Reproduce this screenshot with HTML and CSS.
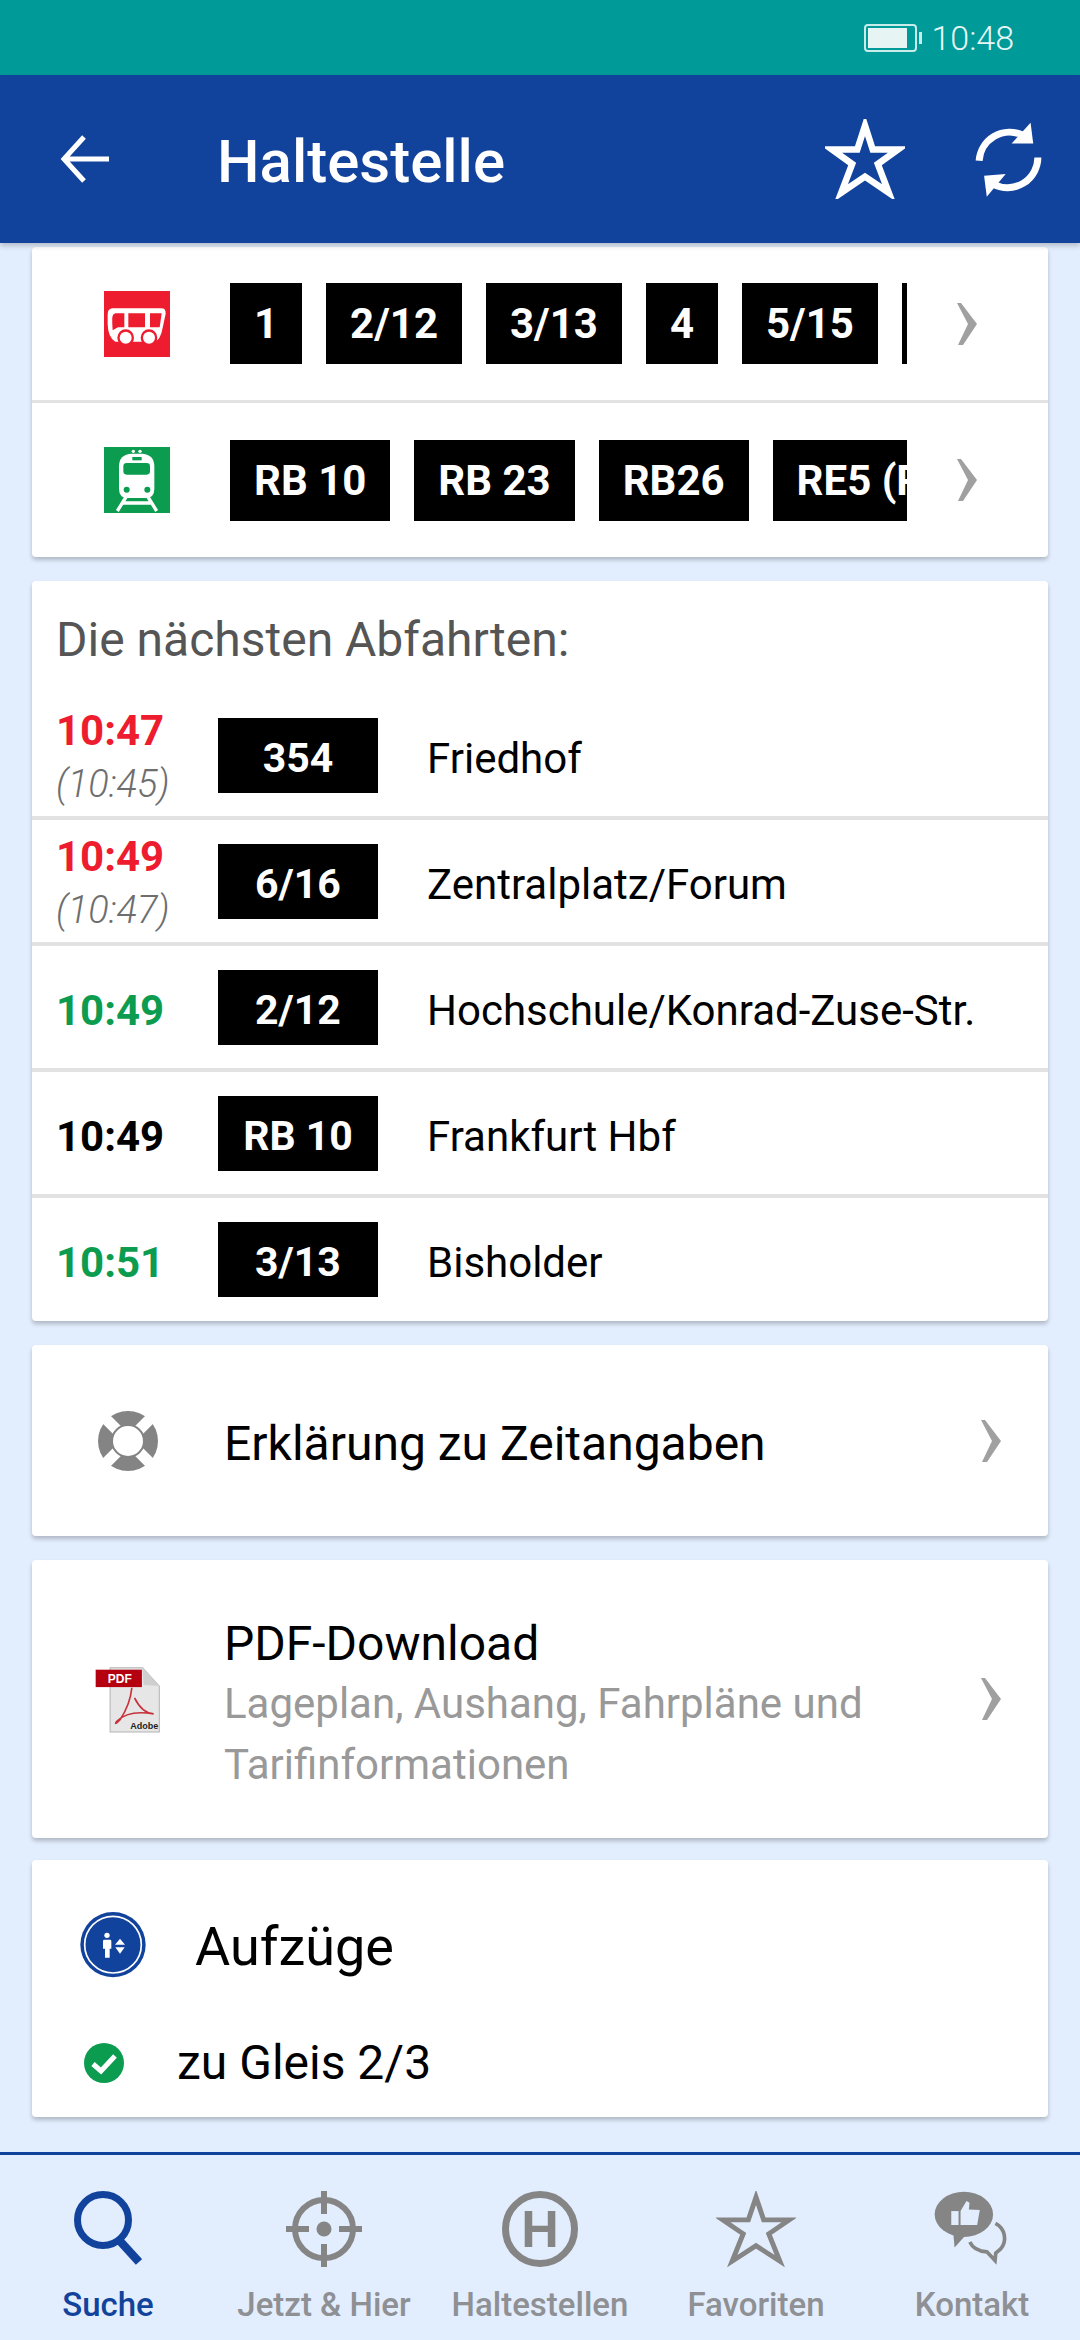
FILE: index.html
```html
<!DOCTYPE html>
<html lang="de">
<head>
    <meta charset="UTF-8">
    <meta name="viewport" content="width=device-width, initial-scale=1.0">
    <title>Haltestelle</title>
    <link rel="stylesheet" href="styles.css">
</head>
<body>
    <div class="statusbar">
        <svg class="battery" viewBox="0 0 60 28" width="60" height="28">
            <rect x="1" y="1" width="51" height="26" rx="3" fill="none" stroke="#c8ecea" stroke-width="2"/>
            <rect x="4" y="4" width="39" height="20" fill="#e6f5f3"/>
            <rect x="55" y="8" width="3" height="12" fill="#c8ecea"/>
        </svg>
        <span class="clock">10:48</span>
    </div>

    <header class="appbar">
        <svg class="back" viewBox="0 0 50 50" width="50" height="50">
            <path d="M24 3 L4 25 L24 47 M4 25 H49" fill="none" stroke="#fff" stroke-width="5"/>
        </svg>
        <h1>Haltestelle</h1>
        <svg class="action-star" viewBox="0 0 80 80" width="80" height="80">
            <polygon points="40,6.6 47.7,30.4 73.2,30.4 52.8,45 63.8,73.8 40,57.6 16.2,73.8 27.2,45 6.8,30.4 32.3,30.4" fill="none" stroke="#fff" stroke-width="6.5" stroke-miterlimit="10"/>
        </svg>
        <svg class="action-refresh" viewBox="490 30 210 232" width="70" height="77">
            <path d="M505 150 A92 92 0 0 1 635 72 M682 140 A92 92 0 0 1 550 222" fill="none" stroke="#fff" stroke-width="21"/>
            <polygon points="660,35 668,98 603,98" fill="#fff"/>
            <polygon points="528,258 520,195 585,190" fill="#fff"/>
        </svg>
    </header>

    <main class="content">
        <section class="card">
            <div class="lines-row">
                <svg class="mode-icon" viewBox="0 0 198 198" width="66" height="66">
                    <rect width="198" height="198" fill="#ed1c2e"/>
                    <path d="M24 52 H172 Q186 52 185 68 L176 110 Q170 148 150 152 H34 Q12 140 11 100 V70 Q11 54 24 52Z" fill="#fff"/>
                    <path d="M34 67 H61 V109 H42 L26 118 Q24 90 25 78 Q26 69 34 67Z M73 67 H123 V109 H73Z M138 67 H173 L167 109 H138Z" fill="#ed1c2e"/>
                    <circle cx="65" cy="140" r="25" fill="#ed1c2e"/>
                    <circle cx="135" cy="140" r="25" fill="#ed1c2e"/>
                    <circle cx="65" cy="140" r="18" fill="#fff"/>
                    <circle cx="135" cy="140" r="18" fill="#fff"/>
                </svg>
                <div class="strip">
                    <span class="badge">1</span>
                    <span class="badge">2/12</span>
                    <span class="badge">3/13</span>
                    <span class="badge">4</span>
                    <span class="badge">5/15</span>
                    <span class="badge">6/16</span>
                </div>
                <svg class="chevron" viewBox="0 0 20 42" width="20" height="42"><polygon points="0,0 4,0 20,21 6,42 1,42 11,21" fill="#a0a0a0"/></svg>
            </div>
            <div class="lines-row divided">
                <svg class="mode-icon" viewBox="0 0 198 198" width="66" height="66">
                    <rect width="198" height="198" fill="#0c9c50"/>
                    <path d="M45 58 Q45 24 80 20 H116 Q151 24 151 58 V125 Q151 153 125 153 H71 Q45 153 45 125Z" fill="#fff"/>
                    <rect x="58" y="48" width="80" height="35" rx="10" fill="#0c9c50"/>
                    <rect x="85" y="30" width="28" height="10" fill="#0c9c50"/>
                    <circle cx="88" cy="13" r="5" fill="#fff"/>
                    <circle cx="108" cy="13" r="5" fill="#fff"/>
                    <circle cx="68" cy="128" r="9" fill="#0c9c50"/>
                    <circle cx="130" cy="128" r="9" fill="#0c9c50"/>
                    <path d="M66 150 L40 192 M132 150 L158 192 M56 168 H142" fill="none" stroke="#fff" stroke-width="10"/>
                </svg>
                <div class="strip">
                    <span class="badge">RB 10</span>
                    <span class="badge">RB 23</span>
                    <span class="badge">RB26</span>
                    <span class="badge">RE5 (RB)</span>
                </div>
                <svg class="chevron" viewBox="0 0 20 42" width="20" height="42"><polygon points="0,0 4,0 20,21 6,42 1,42 11,21" fill="#a0a0a0"/></svg>
            </div>
        </section>

        <section class="card">
            <h2 class="departures-title">Die nächsten Abfahrten:</h2>
            <div class="departure">
                <div class="times"><span class="time late">10:47</span><span class="planned">(10:45)</span></div>
                <span class="badge badge-fixed">354</span>
                <span class="destination">Friedhof</span>
            </div>
            <div class="departure">
                <div class="times"><span class="time late">10:49</span><span class="planned">(10:47)</span></div>
                <span class="badge badge-fixed">6/16</span>
                <span class="destination">Zentralplatz/Forum</span>
            </div>
            <div class="departure">
                <div class="times"><span class="time ontime">10:49</span></div>
                <span class="badge badge-fixed">2/12</span>
                <span class="destination">Hochschule/Konrad-Zuse-Str.</span>
            </div>
            <div class="departure">
                <div class="times"><span class="time">10:49</span></div>
                <span class="badge badge-fixed">RB 10</span>
                <span class="destination">Frankfurt Hbf</span>
            </div>
            <div class="departure">
                <div class="times"><span class="time ontime">10:51</span></div>
                <span class="badge badge-fixed">3/13</span>
                <span class="destination">Bisholder</span>
            </div>
        </section>

        <section class="card link-card link-help">
            <svg class="link-icon" viewBox="0 0 60 60" width="60" height="60">
                <circle cx="30" cy="30" r="30" fill="#848484"/>
                <path d="M8 8 L52 52 M52 8 L8 52" stroke="#fff" stroke-width="11"/>
                <circle cx="30" cy="30" r="16" fill="#fff" stroke="#848484" stroke-width="2"/>
            </svg>
            <div class="link-text">
                <div class="link-title">Erklärung zu Zeitangaben</div>
            </div>
            <svg class="chevron" viewBox="0 0 20 42" width="20" height="42"><polygon points="0,0 4,0 20,21 6,42 1,42 11,21" fill="#a0a0a0"/></svg>
        </section>

        <section class="card link-card link-pdf">
            <svg class="link-icon" viewBox="30 35 200 200" width="67" height="67">
                <path d="M75 40 H172 L222 95 V232 H75Z" fill="#e6e6e6" stroke="#b4b4b4" stroke-width="3"/>
                <path d="M172 40 L175 92 L222 95Z" fill="#cfcfcf"/>
                <path d="M140 100 Q135 150 105 195 Q85 215 95 200 Q130 165 205 178 Q170 175 148 130" fill="none" stroke="#c8323c" stroke-width="5"/>
                <rect x="32" y="46" width="138" height="52" fill="#b4000f"/>
                <text x="68" y="86" class="pdf-label">PDF</text>
                <text x="135" y="222" class="pdf-brand">Adobe</text>
            </svg>
            <div class="link-text">
                <div class="link-title">PDF-Download</div>
                <div class="link-sub">Lageplan, Aushang, Fahrpläne und Tarifinformationen</div>
            </div>
            <svg class="chevron" viewBox="0 0 20 42" width="20" height="42"><polygon points="0,0 4,0 20,21 6,42 1,42 11,21" fill="#a0a0a0"/></svg>
        </section>

        <section class="card lifts">
            <div class="lifts-head">
                <svg viewBox="120 95 198 198" width="66" height="66">
                    <circle cx="219" cy="193" r="98" fill="#12439c"/>
                    <circle cx="219" cy="193" r="85" fill="none" stroke="#fff" stroke-width="5"/>
                    <circle cx="201" cy="165" r="8" fill="#fff"/>
                    <path d="M193 178 H210 Q214 178 214 182 V205 H209 V232 H195 V205 H189 V182 Q189 178 193 178Z" fill="#fff"/>
                    <polygon points="240,175 225,193 255,193" fill="#fff"/>
                    <polygon points="226,201 254,201 240,220" fill="#fff"/>
                </svg>
                <h2>Aufzüge</h2>
            </div>
            <div class="lift-row">
                <svg viewBox="0 0 40 40" width="40" height="40">
                    <circle cx="20" cy="20" r="20" fill="#0c9c50"/>
                    <path d="M9 21 L17 28 L31 13" fill="none" stroke="#fff" stroke-width="5"/>
                </svg>
                <span>zu Gleis 2/3</span>
            </div>
        </section>
    </main>

    <nav class="tabbar">
        <div class="tab active">
            <svg viewBox="0 0 68 76" width="68" height="76">
                <circle cx="29" cy="29" r="25.5" fill="none" stroke="#12439c" stroke-width="7"/>
                <path d="M45 49 L65 71" stroke="#12439c" stroke-width="8.5"/>
            </svg>
            <span>Suche</span>
        </div>
        <div class="tab">
            <svg viewBox="0 0 76 76" width="76" height="76">
                <circle cx="38" cy="38" r="29" fill="none" stroke="#858585" stroke-width="6"/>
                <path d="M38 0 V23 M38 53 V76 M0 38 H23 M53 38 H76" stroke="#858585" stroke-width="6"/>
                <circle cx="38" cy="38" r="7.5" fill="#858585"/>
            </svg>
            <span>Jetzt &amp; Hier</span>
        </div>
        <div class="tab">
            <svg viewBox="0 0 76 76" width="76" height="76">
                <circle cx="38" cy="38" r="34.5" fill="none" stroke="#858585" stroke-width="7"/>
                <text x="38" y="56" class="stop-label">H</text>
            </svg>
            <span>Haltestellen</span>
        </div>
        <div class="tab">
            <svg viewBox="0 0 80 80" width="80" height="76" preserveAspectRatio="none">
                <polygon points="40,6.6 47.7,30.4 73.2,30.4 52.8,45 63.8,73.8 40,57.6 16.2,73.8 27.2,45 6.8,30.4 32.3,30.4" fill="none" stroke="#858585" stroke-width="5" stroke-miterlimit="10"/>
            </svg>
            <span>Favoriten</span>
        </div>
        <div class="tab">
            <svg viewBox="30 25 232 228" width="77" height="76">
                <ellipse cx="120" cy="95" rx="88" ry="68" fill="#858585"/>
                <polygon points="88,150 92,195 128,155" fill="#858585"/>
                <rect x="82" y="85" width="22" height="42" fill="#e2edfd"/>
                <path d="M110 85 L128 55 L137 60 L135 80 L168 82 L160 127 H110Z" fill="#e2edfd"/>
                <path d="M215 122 A50 50 0 0 1 230 200 L216 212 L214 234 L190 208 Q150 205 138 178" fill="none" stroke="#858585" stroke-width="11"/>
            </svg>
            <span>Kontakt</span>
        </div>
    </nav>
</body>
</html>
```

FILE: styles.css
```css
body {
    margin: 0;
    width: 1080px;
    height: 2340px;
    overflow: hidden;
    display: flex;
    flex-direction: column;
    background-color: #e2edfd;
    font-family: Roboto, "Noto Sans", sans-serif;
    color: #000000;
}

svg {
    display: block;
    flex: none;
}

h1, h2 {
    margin: 0;
    font-weight: 400;
}

/* top bars */
.statusbar {
    height: 75px;
    flex: none;
    display: flex;
    justify-content: flex-end;
    align-items: center;
    padding-right: 66px;
    background-color: #009b98;
}

.clock {
    margin-left: 7px;
    font-size: 34px;
    font-weight: 300;
    color: #e8f6f5;
}

.appbar {
    height: 168px;
    flex: none;
    display: flex;
    align-items: center;
    padding-left: 60px;
    background-color: #12439c;
    box-shadow: 0 3px 5px rgba(0, 0, 0, 0.2);
    position: relative;
}

.appbar h1 {
    margin-left: 107px;
    padding-top: 4px;
    font-size: 60px;
    font-weight: 500;
    color: #ffffff;
}

.action-star {
    margin-left: auto;
}

.action-refresh {
    margin: 0 36px 0 69px;
}

/* cards */
.content {
    flex: 1;
    min-height: 0;
    display: flex;
    flex-direction: column;
    gap: 24px;
    padding: 4px 32px 0;
}

.card {
    flex: none;
    background-color: #ffffff;
    border-radius: 4px;
    box-shadow: 0 3px 4px rgba(0, 0, 0, 0.22);
}

.lines-row {
    height: 153px;
    display: flex;
    align-items: center;
    padding-left: 72px;
}

.lines-row.divided {
    height: 154px;
    border-top: 3px solid #e2e2e2;
}

.strip {
    width: 677px;
    flex: none;
    margin: 0 50px 0 60px;
    display: flex;
    gap: 24px;
    overflow: hidden;
}

.badge {
    flex: none;
    height: 81px;
    padding: 0 24px;
    display: flex;
    justify-content: center;
    align-items: center;
    background-color: #000000;
    color: #ffffff;
    font-size: 42px;
    font-weight: 700;
    white-space: nowrap;
}

.badge-fixed {
    width: 160px;
    height: 75px;
    box-sizing: border-box;
    padding: 5px 0 0;
    font-size: 41px;
}

/* departures */
.departures-title {
    height: 113px;
    box-sizing: border-box;
    padding: 32px 0 0 24px;
    font-size: 48px;
    line-height: 54px;
    color: #555555;
}

.departure {
    height: 122px;
    display: flex;
    align-items: center;
    padding-left: 24px;
    border-bottom: 4px solid #e2e2e2;
}

.departure:last-child {
    border-bottom: 0;
    padding-bottom: 1px;
}

.times {
    width: 162px;
    flex: none;
    display: flex;
    flex-direction: column;
    padding-top: 8px;
}

.time {
    font-size: 42px;
    line-height: 50px;
    font-weight: 700;
}

.late {
    color: #ed1c2e;
}

.ontime {
    color: #0c9c50;
}

.planned {
    font-size: 38px;
    line-height: 57px;
    font-style: italic;
    font-weight: 300;
    color: #6e6e6e;
}

.destination {
    margin: 6px 0 0 49px;
    font-size: 42px;
}

/* link cards */
.link-card {
    display: flex;
    align-items: center;
}

.link-help {
    height: 191px;
    padding-left: 66px;
}

.link-pdf {
    height: 278px;
    margin-bottom: -2px;
    padding-left: 63px;
}

.link-text {
    flex: 1;
    margin-left: 66px;
}

.link-help .link-text {
    padding-top: 6px;
}

.link-pdf .link-text {
    margin-left: 62px;
    padding-top: 10px;
}

.link-title {
    font-size: 48px;
    line-height: 59px;
}

.link-sub {
    font-size: 42px;
    line-height: 61px;
    color: #999999;
}

.link-card .chevron {
    margin: 0 47px 0 20px;
}

.pdf-label {
    font-family: "Liberation Sans", sans-serif;
    font-size: 36px;
    font-weight: 700;
    fill: #ffffff;
}

.pdf-brand {
    font-family: "Liberation Sans", sans-serif;
    font-size: 27px;
    font-weight: 700;
    fill: #222222;
}

/* lifts */
.lifts {
    height: 257px;
}

.lifts-head {
    display: flex;
    align-items: center;
    padding: 52px 0 0 48px;
}

.lifts-head h2 {
    margin-left: 49px;
    padding-top: 3px;
    font-size: 54px;
}

.lift-row {
    display: flex;
    align-items: center;
    margin-top: 56px;
    padding-left: 52px;
    font-size: 48px;
}

.lift-row span {
    margin-left: 53px;
}

/* bottom nav */
.tabbar {
    height: 185px;
    flex: none;
    display: grid;
    grid-template-columns: repeat(5, 1fr);
    border-top: 3px solid #12439c;
}

.tab {
    display: flex;
    flex-direction: column;
    align-items: center;
    padding-top: 36px;
    font-size: 33px;
    font-weight: 500;
    white-space: nowrap;
    color: #8e9094;
}

.tab span {
    margin-top: 18px;
}

.tab.active {
    color: #12439c;
}

.stop-label {
    font-family: "Liberation Sans", sans-serif;
    font-size: 52px;
    font-weight: 700;
    fill: #858585;
    text-anchor: middle;
}
```
